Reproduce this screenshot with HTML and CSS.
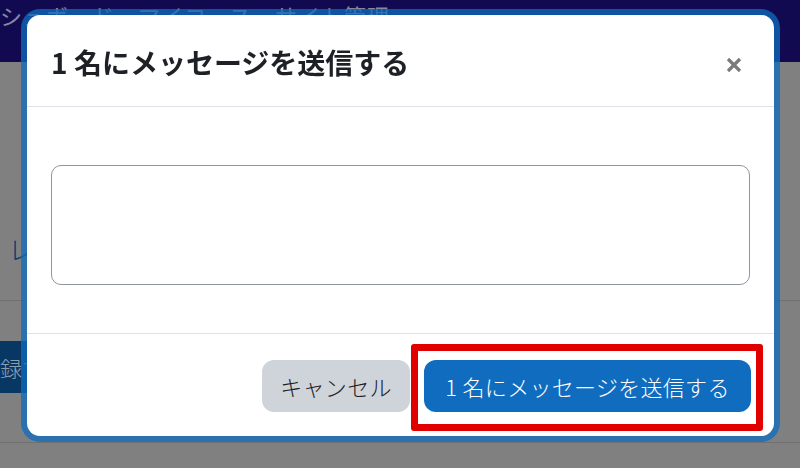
FILE: index.html
```html
<!DOCTYPE html>
<html lang="ja">
<head>
  <meta charset="UTF-8">
  <title>メッセージを送信</title>
  <meta name="viewport" content="width=device-width,initial-scale=1">
  <link rel="stylesheet" href="styles.css">
</head>
<body>
  <div class="page">
    <nav class="navbar"><span class="nav-text">シュボード　マイコース　サイト管理</span></nav>
    <div class="page-body">
      <div class="row row-title"><span class="cut-title">レ</span></div>
      <div class="row row-action"><span class="page-btn">録で</span></div>
    </div>
  </div>

  <div class="modal-layer">
    <div class="modal" role="dialog">
      <div class="modal-header">
        <h5 class="modal-title">1 名にメッセージを送信する</h5>
        <button class="close" aria-label="閉じる">
          <svg width="16" height="16" viewBox="0 0 16 16"><path d="M2 2L14 14M14 2L2 14" stroke="#7a7a7a" stroke-width="3.2" stroke-linecap="butt"/></svg>
        </button>
      </div>
      <div class="modal-body">
        <textarea class="message"></textarea>
      </div>
      <div class="modal-footer">
        <button class="btn btn-secondary">キャンセル</button>
        <span class="highlight"><button class="btn btn-primary">1 名にメッセージを送信する</button></span>
      </div>
    </div>
  </div>
</body>
</html>
```

FILE: styles.css
```css
body { margin: 0; padding: 0; background: #808080; font-family: "Noto Sans CJK JP", "Noto Sans", sans-serif; overflow: hidden; }

.page { height: 468px; }
.navbar { height: 62px; background: #110a50; overflow: hidden; }
.nav-text { display: block; padding: 2px 0 0 0; font-size: 22px; line-height: 26px; color: #8a889f; white-space: nowrap; letter-spacing: 1px; }
.row-title { height: 238px; border-bottom: 1px solid #707070; }
.cut-title { display: block; padding: 172px 0 0 8px; font-size: 26px; line-height: 30px; color: #0d3a6a; font-weight: 300; }
.row-action { height: 142px; padding-top: 40px; box-sizing: border-box; border-bottom: 1px solid #707070; }
.page-btn { display: block; width: 60px; height: 52px; background: #083764; color: #8d9db0; font-size: 22px; line-height: 52px; white-space: nowrap; font-weight: 300; }

.modal-layer { position: fixed; top: 0; left: 0; right: 0; bottom: 0; padding-top: 15px; }
.modal { width: 747px; margin-left: 27px; background: #fff; border-radius: 13px; box-shadow: 0 0 0 6px rgba(15, 108, 191, .75); }

.modal-header { height: 92px; box-sizing: border-box; padding: 0 32px 0 24px; border-bottom: 1px solid #dee2e6; display: flex; align-items: center; justify-content: space-between; }
.modal-title { margin: 0; font-size: 28px; font-weight: bold; color: #1d2125; line-height: 1.2; padding-top: 4px; }
.close { border: none; background: none; padding: 0; margin: 8px 0 0; width: 16px; height: 16px; cursor: pointer; }
.close svg { display: block; }

.modal-body { padding: 58px 24px 48px; }
.message { display: block; width: 100%; height: 120px; box-sizing: border-box; border: 1px solid #8f959e; border-radius: 10px; resize: none; font-family: inherit; font-size: 22px; padding: 8px 14px; }

.modal-footer { height: 103px; box-sizing: border-box; border-top: 1px solid #dee2e6; padding: 26px 23px 24px; display: flex; justify-content: flex-end; align-items: flex-start; gap: 14px; }
.btn { height: 52px; border: none; border-radius: 12px; font-family: inherit; font-size: 22px; font-weight: 300; padding: 0; cursor: pointer; line-height: 52px; white-space: nowrap; letter-spacing: 0.3px; }
.btn-secondary { width: 148px; background: #ced4da; color: #1d2125; }
.btn-primary { width: 327px; background: #0f6cbf; color: #fff; }
.highlight { position: relative; display: block; }
.highlight::after { content: ""; position: absolute; top: -16px; left: -13px; right: -12px; bottom: -19px; border: 7px solid #e00000; border-radius: 3px; pointer-events: none; }
```
